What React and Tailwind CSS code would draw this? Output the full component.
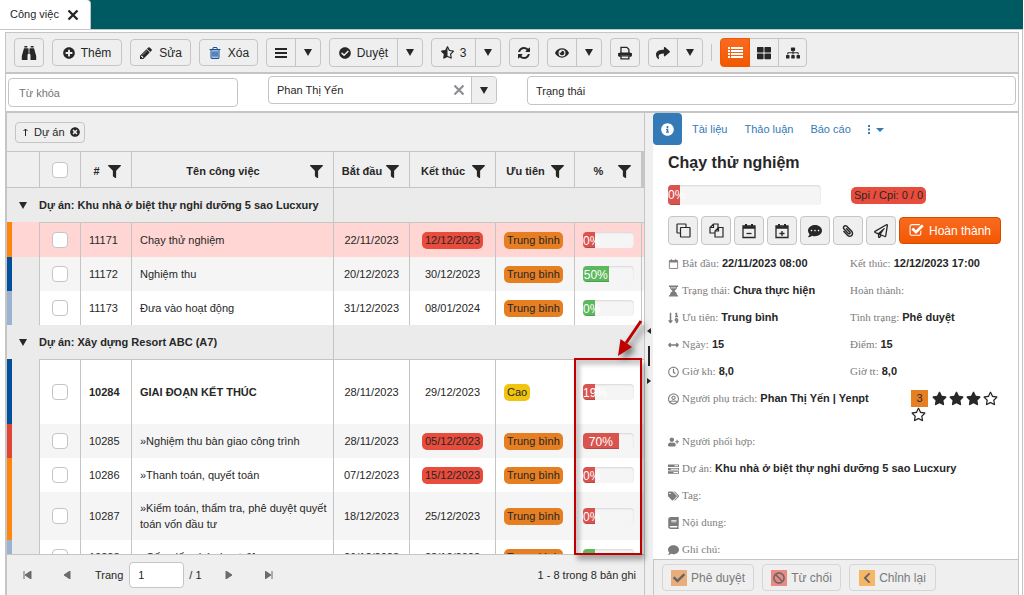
import {
    FaArrowsAltH,
    FaBan,
    FaBook,
    FaCheck,
    FaCheckCircle,
    FaChevronLeft,
    FaComment,
    FaCommentDots,
    FaEye,
    FaFilter,
    FaInfoCircle,
    FaPaperclip,
    FaPlusCircle,
    FaRegClock,
    FaRegPaperPlane,
    FaRegStar,
    FaRegUserCircle,
    FaShare,
    FaSitemap,
    FaSortNumericDown,
    FaStar,
    FaStarHalfAlt,
    FaTags,
    FaThLarge,
    FaTimesCircle,
    FaUserPlus,
} from "react-icons/fa";

const tasks = [
    {
        project: "Dự án: Khu nhà ở biệt thự nghỉ dưỡng 5 sao Lucxury",
        rows: [
            { id: "11171", name: "Chạy thử nghiệm", start: "22/11/2023", end: "12/12/2023", late: true, priority: "Trung bình", percent: 0, bar: "red", strip: "bg-[#ff860d]", selected: true, height: "h-[35px]" },
            { id: "11172", name: "Nghiệm thu", start: "20/12/2023", end: "30/12/2023", priority: "Trung bình", percent: 50, bar: "green", strip: "bg-[#00509b]" },
            { id: "11173", name: "Đưa vào hoạt động", start: "31/12/2023", end: "08/01/2024", priority: "Trung bình", percent: 0, bar: "green", strip: "bg-[#9ab3d3]" },
        ],
    },
    {
        project: "Dự án: Xây dựng Resort ABC (A7)",
        rows: [
            { id: "10284", name: "GIAI ĐOẠN KẾT THÚC", start: "28/11/2023", end: "29/12/2023", priority: "Cao", percent: 19, bar: "red", strip: "bg-[#00509b]", bold: true, height: "h-[65px]" },
            { id: "10285", name: "»Nghiệm thu bàn giao công trình", start: "28/11/2023", end: "05/12/2023", late: true, priority: "Trung bình", percent: 70, bar: "red", strip: "bg-[#e04433]" },
            { id: "10286", name: "»Thanh toán, quyết toán", start: "07/12/2023", end: "15/12/2023", late: true, priority: "Trung bình", percent: 0, bar: "red", strip: "bg-[#ff860d]" },
            { id: "10287", name: "»Kiểm toán, thẩm tra, phê duyệt quyết toán vốn đầu tư", start: "18/12/2023", end: "25/12/2023", priority: "Trung bình", percent: 0, bar: "red", strip: "bg-[#ff860d]", height: "h-12" },
            { id: "10288", name: "»Cấp giấy phép hoạt động", start: "26/12/2023", end: "28/12/2023", priority: "Trung bình", percent: 0, bar: "green", strip: "bg-[#9ab3d3]" },
        ],
    },
];

const columns = [
    { label: "#", width: "w-[51px]" },
    { label: "Tên công việc", width: "" },
    { label: "Bắt đầu", width: "w-[76px]" },
    { label: "Kết thúc", width: "w-[86px]" },
    { label: "Ưu tiên", width: "w-[79px]" },
    { label: "%", width: "w-[67px]" },
];

const details = [
    [{ icon: CalendarIcon, label: "Bắt đầu:", value: "22/11/2023 08:00" }, { label: "Kết thúc:", value: "12/12/2023 17:00" }],
    [{ icon: HourglassIcon, label: "Trạng thái:", value: "Chưa thực hiện" }, { label: "Hoàn thành:" }],
    [{ icon: FaSortNumericDown, label: "Ưu tiên:", value: "Trung bình" }, { label: "Tình trạng:", value: "Phê duyệt" }],
    [{ icon: FaArrowsAltH, label: "Ngày:", value: "15" }, { label: "Điểm:", value: "15" }],
    [{ icon: FaRegClock, label: "Giờ kh:", value: "8,0" }, { label: "Giờ tt:", value: "8,0" }],
];

const extraDetails = [
    { icon: FaUserPlus, label: "Người phối hợp:" },
    { icon: ServerIcon, label: "Dự án:", value: "Khu nhà ở biệt thự nghỉ dưỡng 5 sao Lucxury" },
    { icon: FaTags, label: "Tag:" },
    { icon: FaBook, label: "Nội dung:" },
    { icon: FaComment, label: "Ghi chú:" },
];

export default function App() {
    return (
        <div className="flex h-screen flex-col overflow-hidden bg-white font-['Liberation_Sans',Arial,sans-serif] text-[11px] text-[#272727]">
            <TabStrip />
            <div className="mr-px flex min-h-0 flex-1 flex-col border-t border-r border-[#c5c5c5] pt-[2px] pr-[3px] pl-[5px]">
                <Toolbar />
                <Filters />
                <main className="flex min-h-0 flex-1 border-r border-[#c5c5c5]">
                    <TaskGrid />
                    <Splitter />
                    <TaskDetail />
                </main>
            </div>
        </div>
    );
}

function TabStrip() {
    return (
        <div className="mr-px flex h-[29px] shrink-0 bg-[#005a61]">
            <div className="flex w-[91px] items-center gap-2 rounded-tr border-r border-[#c5c5c5] bg-white pl-[10px]">
                <span>Công việc</span>
                <button aria-label="Đóng">
                    <svg viewBox="0 0 12 12" className="size-3" stroke="currentColor" strokeWidth="2.4">
                        <path d="M1.5 1.5l9 9M10.5 1.5l-9 9" />
                    </svg>
                </button>
            </div>
        </div>
    );
}

function Toolbar() {
    return (
        <div className="flex h-[42px] shrink-0 items-center gap-2 border border-b-2 border-[#c5c5c5] bg-[#efefef] px-2 text-xs">
            <ToolButton width="w-[30px]" label="Tìm kiếm" icon={<BinocularsIcon className="size-4" />} />
            <ToolButton width="w-[70px]" text="Thêm" icon={<FaPlusCircle className="size-3" />} />
            <ToolButton width="w-[61px]" text="Sửa" icon={<PencilIcon className="size-[14px]" />} />
            <ToolButton width="w-[59px]" text="Xóa" icon={<TrashIcon className="size-[14px] text-[#1f4f8a]" />} />
            <SplitButton width="w-7" label="Danh sách" icon={<MenuIcon />} />
            <SplitButton width="w-[67px]" text="Duyệt" icon={<FaCheckCircle className="size-3" />} />
            <SplitButton width="w-[43px]" text="3" icon={<FaStarHalfAlt className="size-[13px]" />} />
            <ToolButton width="w-[30px]" label="Tải lại" icon={<RefreshIcon className="size-[14px]" />} />
            <SplitButton width="w-7" label="Xem" icon={<FaEye className="size-[14px]" />} />
            <ToolButton width="w-[30px]" label="In" icon={<PrintIcon className="size-[14px]" />} />
            <SplitButton width="w-7" label="Chia sẻ" icon={<FaShare className="size-[14px]" />} />
            <span className="h-[17px] w-px bg-[#c5c5c5]" />
            <div className="flex h-[29px] rounded border border-[#c5c5c5]">
                <button aria-label="Dạng danh sách" className="-m-px flex w-[30px] items-center justify-center rounded-l border border-[#f35800] bg-linear-to-b from-[#f96a1e] to-[#f35800] text-white">
                    <ListIcon />
                </button>
                <button aria-label="Dạng lưới" className="flex w-[29px] items-center justify-center">
                    <FaThLarge className="size-[14px]" />
                </button>
                <button aria-label="Dạng cây" className="flex w-7 items-center justify-center border-l border-[#c5c5c5]">
                    <FaSitemap className="size-[14px]" />
                </button>
            </div>
        </div>
    );
}

function ToolButton({ width, label, text, icon }) {
    return (
        <button
            aria-label={label}
            className={`flex shrink-0 items-center justify-center gap-[6px] rounded border border-[#c5c5c5] ${text ? "h-[27px]" : "h-[29px]"} ${width}`}
        >
            {icon}
            {text}
        </button>
    );
}

function SplitButton({ width, label, text, icon }) {
    return (
        <div className="flex h-[29px] shrink-0 rounded border border-[#c5c5c5]">
            <button aria-label={label} className={`flex items-center justify-center gap-[6px] ${width}`}>
                {icon}
                {text}
            </button>
            <button aria-label="Mở danh sách" className="flex w-[25px] items-center justify-center border-l border-[#c5c5c5]">
                <CaretIcon />
            </button>
        </div>
    );
}

function Filters() {
    return (
        <div className="flex h-[39px] shrink-0 items-start gap-[30px] border-x border-b-2 border-[#c5c5c5] bg-white px-[2px] pt-[2px]">
            <input
                aria-label="Từ khóa"
                placeholder="Từ khóa"
                className="mt-[2px] h-[29px] w-[230px] rounded border border-[#c5c5c5] px-[10px] placeholder:text-[#757575]"
            />
            <div className="flex h-7 w-[229px] rounded border border-[#c5c5c5]">
                <input aria-label="Người phụ trách" defaultValue="Phan Thị Yến" className="min-w-0 flex-1 px-2" />
                <button aria-label="Xóa lựa chọn" className="w-6 text-[#8d8f94]">
                    <svg viewBox="0 0 12 12" className="mx-auto size-3" stroke="currentColor" strokeWidth="2.2">
                        <path d="M1.5 1.5l9 9M10.5 1.5l-9 9" />
                    </svg>
                </button>
                <button aria-label="Mở danh sách" className="flex w-[25px] items-center justify-center rounded-r border-l border-[#c5c5c5] bg-[#efefef]">
                    <CaretIcon />
                </button>
            </div>
            <input
                aria-label="Trạng thái"
                placeholder="Trạng thái"
                className="h-[29px] min-w-0 flex-1 rounded border border-[#c5c5c5] px-2 placeholder:text-[#272727]"
            />
        </div>
    );
}

function TaskGrid() {
    return (
        <section className="relative flex min-w-0 flex-[637] flex-col border-r border-l-2 border-[#c5c5c5] bg-[#efefef]">
            {/* Group by chip */}
            <div className="flex h-[38px] shrink-0 items-center px-2">
                <div className="flex h-[21px] items-center gap-[5px] rounded border border-[#c5c5c5] pr-1 pl-[6px]">
                    <svg viewBox="0 0 7 9" className="h-[9px] w-[7px]" fill="none" stroke="currentColor">
                        <path d="M3.5 8V1M1.500 3L3.5 1L5.500 3" />
                    </svg>
                    <span>Dự án</span>
                    <button aria-label="Bỏ nhóm">
                        <FaTimesCircle className="size-[10px]" />
                    </button>
                </div>
            </div>

            <div className="min-h-0 flex-1 overflow-hidden border-t border-[#c5c5c5]">
                <table className="w-full table-fixed border-separate border-spacing-0">
                    <thead>
                        <tr className="h-9">
                            <th className="w-8 border-b border-[#c5c5c5]" />
                            <th className="w-[41px] border-b border-l border-[#c5c5c5]">
                                <Checkbox label="Chọn tất cả" />
                            </th>
                            {columns.map((col) => (
                                <th key={col.label} className={`border-b border-l border-[#c5c5c5] px-0 pt-[3px] pb-0 ${col.width}`}>
                                    <div className="flex items-center pr-[10px] pl-1">
                                        <span className="flex-1 text-center whitespace-nowrap">{col.label}</span>
                                        <FaFilter className="size-[13px] shrink-0" />
                                    </div>
                                </th>
                            ))}
                            <th className="w-[3px] border-b border-l border-[#c5c5c5] bg-[#c5c5c5]" />
                        </tr>
                    </thead>
                    {tasks.map((group) => (
                        <tbody key={group.project}>
                            <tr className="h-[34px] bg-[#ebebeb] font-bold">
                                <td className="p-0">
                                    <button aria-label="Thu gọn nhóm" className="mx-auto block">
                                        <CaretIcon />
                                    </button>
                                </td>
                                <td colSpan={3} className="p-0 whitespace-nowrap">
                                    {group.project}
                                </td>
                                <td colSpan={5} className="border-l border-[#c5c5c5] p-0" />
                            </tr>
                            {group.rows.map((row, i) => (
                                <TaskRow key={row.id} row={row} index={i} />
                            ))}
                        </tbody>
                    ))}
                </table>
            </div>

            {/* Pager */}
            <div className="flex h-[41px] shrink-0 items-center border-t border-[#c5c5c5] pr-2 pl-4">
                <PagerButton width="w-10" label="Trang đầu" path="M1 0v8M8 0v8L2 4z" />
                <PagerButton width="w-8" label="Trang trước" path="M7 0v8L1 4z" />
                <label className="flex items-center gap-[6px]">
                    Trang
                    <input defaultValue="1" className="h-[26px] w-[55px] rounded border border-[#c5c5c5] bg-white px-2" />
                </label>
                <span className="mr-[23px] ml-[5px]">/ 1</span>
                <PagerButton width="w-10" label="Trang sau" path="M1 0v8L7 4z" />
                <PagerButton width="w-10" label="Trang cuối" path="M7 0v8M0 0v8L6 4z" />
                <span className="ml-auto">1 - 8 trong 8 bản ghi</span>
            </div>

            <Highlight />
        </section>
    );
}

function TaskRow({ row, index }) {
    const background = row.selected ? "bg-[#ffd6d4]" : index % 2 === 1 ? "bg-[#f5f5f5]" : "bg-white";
    const top = index === 0 ? "border-t" : "";
    const cell = `border-l border-[#c5c5c5] pl-2 pr-0 py-0 ${top}`;

    return (
        <tr className={`${row.height || "h-[34px]"} ${background}`}>
            <td className={`p-0 ${row.selected ? "" : "bg-[#ebebeb]"}`}>
                <div className={`w-[5px] ${row.height || "h-[34px]"} ${row.strip}`} />
            </td>
            <td className={`border-l border-[#c5c5c5] p-0 ${top}`}>
                <Checkbox label={`Chọn ${row.id}`} />
            </td>
            <td className={`${cell} ${row.bold ? "font-bold" : ""}`}>{row.id}</td>
            <td className={`${cell} leading-4 ${row.bold ? "font-bold" : ""}`}>{row.name}</td>
            <td className={`border-l border-[#c5c5c5] p-0 text-center ${top}`}>{row.start}</td>
            <td className={`border-l border-[#c5c5c5] p-0 text-center ${top}`}>
                <span className={`inline-block rounded-[5px] px-[3px] leading-[17px] ${row.late ? "bg-[#e74c3c]" : ""}`}>{row.end}</span>
            </td>
            <td className={cell}>
                <span
                    className={`inline-block rounded-[5px] px-[3px] leading-[17px] whitespace-nowrap ${row.priority === "Cao" ? "bg-[#f1c40f]" : "bg-[#e67e22]"}`}
                >
                    {row.priority}
                </span>
            </td>
            <td className={cell}>
                <div className="pr-[7px]">
                    <ProgressBar percent={row.percent} color={row.bar} size="h-4 leading-[19px]" />
                </div>
            </td>
            <td className={`border-l border-[#c5c5c5] p-0 ${top}`} />
        </tr>
    );
}

function ProgressBar({ percent, color, size }) {
    return (
        <div className={`overflow-hidden rounded bg-[#f5f5f5] text-xs text-white shadow-[inset_0_1px_2px_rgba(0,0,0,0.12)] ${size}`}>
            <div
                className={`h-full min-w-3 text-center shadow-[inset_0_-1px_0_rgba(0,0,0,0.15)] ${color === "red" ? "bg-[#d9534f]" : "bg-[#5cb85c]"}`}
                style={{ width: `${percent}%` }}
            >
                {percent}%
            </div>
        </div>
    );
}

function Checkbox({ label }) {
    return <input type="checkbox" aria-label={label} className="mx-auto block size-4 appearance-none rounded border border-[#c5c5c5] bg-white" />;
}

function PagerButton({ width, label, path }) {
    return (
        <button aria-label={label} className={`flex h-6 justify-start text-[#6b6b6b] ${width}`}>
            <svg viewBox="0 0 9 8" className="my-auto h-2 w-[9px]" fill="currentColor" stroke="currentColor" strokeWidth="1">
                <path d={path} />
            </svg>
        </button>
    );
}

// Red frame and arrow drawn over the percent column
function Highlight() {
    return (
        <div className="pointer-events-none absolute top-[245px] right-[2px] bottom-10 w-[68px]">
            <svg viewBox="0 0 60 52" className="absolute -right-[1px] bottom-full h-[52px] w-[60px] overflow-visible drop-shadow-[4px_4px_3px_rgba(0,0,0,0.5)]">
                <path d="M58 15L43 37" stroke="#c00000" strokeWidth="3" />
                <path d="M35 50L37.500 33L49 41z" fill="#c00000" />
            </svg>
            <div className="h-full border-2 border-[#c00000] shadow-[3px_5px_5px_rgba(0,0,0,0.3),inset_4px_5px_4px_rgba(0,0,0,0.2)]" />
        </div>
    );
}

function Splitter() {
    return (
        <div className="flex w-2 shrink-0 flex-col items-center justify-center gap-3 bg-[#efefef] pt-1">
            <svg viewBox="0 0 4 6" className="h-[6px] w-1">
                <path d="M4 0v6L0 3z" fill="#272727" />
            </svg>
            <span className="h-5 w-[2px] bg-[#272727]" />
            <svg viewBox="0 0 4 6" className="h-[6px] w-1">
                <path d="M0 0v6L4 3z" fill="#272727" />
            </svg>
        </div>
    );
}

function TaskDetail() {
    return (
        <section className="flex min-w-0 flex-[365] flex-col">
            <nav className="flex h-8 shrink-0 items-center text-[#337ab7]">
                <a href="#info" aria-label="Thông tin" className="mr-[10px] flex h-8 w-[29px] items-center justify-center rounded bg-[#337ab7] text-white">
                    <FaInfoCircle className="size-[13px]" />
                </a>
                <a href="#files" className="mr-[17px]">Tài liệu</a>
                <a href="#discuss" className="mr-[17px]">Thảo luận</a>
                <a href="#report" className="mr-[17px]">Báo cáo</a>
                <a href="#more" aria-label="Thêm">
                    <svg viewBox="0 0 16 9" className="h-[9px] w-4" fill="currentColor">
                        <path d="M0 0h2v2H0zM0 3.5h2v2H0zM0 7h2v2H0zM8 3h8l-4 4z" />
                    </svg>
                </a>
            </nav>

            <div className="min-h-0 flex-1 overflow-hidden pr-4 pl-[15px]">
                <h2 className="mt-2 text-base leading-5 font-bold">Chạy thử nghiệm</h2>

                <div className="mt-3 flex items-center">
                    <div className="w-[183px] pr-[30px]">
                        <ProgressBar percent={0} color="red" size="h-5 leading-5" />
                    </div>
                    <span className="rounded-[5px] bg-[#e74c3c] px-[3px] leading-[17px]">Spi / Cpi: 0 / 0</span>
                </div>

                <div className="mt-[11px] flex items-center gap-[3px]">
                    <ActionButton label="Nhân bản"><CloneIcon /></ActionButton>
                    <ActionButton label="Sao chép"><CopyIcon /></ActionButton>
                    <ActionButton label="Giảm ngày"><CalendarIcon className="size-4" mark="M5.5 10.5h5" /></ActionButton>
                    <ActionButton label="Tăng ngày"><CalendarIcon className="size-4" mark="M5.5 10.5h5M8 8v5" /></ActionButton>
                    <ActionButton label="Bình luận"><FaCommentDots className="size-[14px]" /></ActionButton>
                    <ActionButton label="Đính kèm"><FaPaperclip className="size-3 -scale-x-100" /></ActionButton>
                    <ActionButton label="Gửi"><FaRegPaperPlane className="size-[14px]" /></ActionButton>
                    <button className="flex h-[27px] w-[102px] items-center justify-center gap-[5px] rounded border border-[#d44c00] bg-linear-to-b from-[#f96a1e] to-[#f35800] text-xs text-white">
                        <CheckSquareIcon className="size-[15px]" />
                        Hoàn thành
                    </button>
                </div>

                <dl className="mt-[5px]">
                    {details.map(([left, right]) => (
                        <div key={left.label} className="flex">
                            <div className="w-[182px]">
                                <Field {...left} />
                            </div>
                            <Field {...right} />
                        </div>
                    ))}
                    <div className="flex h-[43px] items-start justify-between">
                        <Field icon={FaRegUserCircle} label="Người phụ trách:" value="Phan Thị Yến | Yenpt" />
                        <div className="mt-[5px] flex w-[91px] flex-wrap items-center gap-x-[2px]">
                            <span className="mr-[2px] w-[17px] bg-[#e67e22] text-center leading-[17px]">3</span>
                            <FaStar className="size-[15px]" />
                            <FaStar className="size-[15px]" />
                            <FaStar className="size-[15px]" />
                            <FaRegStar className="size-[15px]" />
                            <FaRegStar className="size-[15px]" />
                        </div>
                    </div>
                    {extraDetails.map((field) => (
                        <Field key={field.label} {...field} />
                    ))}
                </dl>
            </div>

            {/* Approval actions */}
            <div className="flex h-9 shrink-0 gap-2 border border-r-0 border-b-0 border-[#c5c5c5] bg-[#efefef] px-2 pt-1">
                <ApproveButton width="w-[92px]" color="bg-[#e9ad79]" icon={FaCheck}>Phê duyệt</ApproveButton>
                <ApproveButton width="w-[79px]" color="bg-[#e98b83]" icon={FaBan}>Từ chối</ApproveButton>
                <ApproveButton width="w-[87px]" color="bg-[#f5b668]" icon={FaChevronLeft}>Chỉnh lại</ApproveButton>
            </div>
        </section>
    );
}

function ActionButton({ label, children }) {
    return (
        <button aria-label={label} className="flex h-[29px] w-[30px] items-center justify-center rounded border border-[#c5c5c5] bg-[#efefef]">
            {children}
        </button>
    );
}

function ApproveButton({ width, color, icon: Icon, children }) {
    return (
        <button disabled className={`flex h-[27px] items-center justify-center gap-1 rounded border border-[#d6d6d6] text-xs text-[#7a7a7a] ${width}`}>
            <span className={`flex size-4 items-center justify-center ${color}`}>
                <Icon className="size-3 text-[#666]" />
            </span>
            {children}
        </button>
    );
}

function Field({ icon: Icon, label, value }) {
    return (
        <div className="flex h-[27px] items-center gap-[3px] whitespace-nowrap">
            {Icon && <Icon className="h-3 w-[11px] shrink-0 text-[#7c7c7c]" />}
            <dt className="font-['Liberation_Serif','Times_New_Roman',serif] text-[#7c7c7c]">{label}</dt>
            <dd className="font-bold">{value}</dd>
        </div>
    );
}

function CaretIcon() {
    return (
        <svg viewBox="0 0 8 7" className="h-[7px] w-2" fill="currentColor">
            <path d="M0 0h8L4 7z" />
        </svg>
    );
}

function MenuIcon() {
    return (
        <svg viewBox="0 0 12 10" className="h-[10px] w-3" fill="currentColor">
            <path d="M0 0h12v2H0zM0 4h12v2H0zM0 8h12v2H0z" />
        </svg>
    );
}

function ListIcon() {
    return (
        <svg viewBox="0 0 15 11" className="h-[11px] w-[15px]" fill="currentColor">
            <path d="M0 0h2v2H0zM3 0h12v2H3zM0 3h2v2H0zM3 3h12v2H3zM0 6h2v2H0zM3 6h12v2H3zM0 9h2v2H0zM3 9h12v2H3z" />
        </svg>
    );
}

function BinocularsIcon({ className }) {
    return (
        <svg viewBox="0 0 16 16" className={className} fill="currentColor">
            <path d="M3.500 1H6.300V2.500H3.300zM3 3.200H7V9.500H6.500V15H.8V11zM9.700 1H12.500L12.700 2.500H9.700zM9 3.200H13L15.200 11V15H9.500V9.500H9zM7.400 3.500H8.600V9H7.400z" />
        </svg>
    );
}

function PencilIcon({ className }) {
    return (
        <svg viewBox="0 0 1792 1792" className={className} fill="currentColor">
            <path d="M491 1536l91-91-235-235-91 91v107h128v128h107zm523-928q0-22-22-22-10 0-17 7l-542 542q-7 7-7 17 0 22 22 22 10 0 17-7l542-542q7-7 7-17zm-54-192l416 416-832 832h-416v-416zm683 96q0 53-37 90l-166 166-416-416 166-165q36-38 90-38 53 0 91 38l235 234q37 39 37 91z" />
        </svg>
    );
}

function PrintIcon({ className }) {
    return (
        <svg viewBox="0 0 15 14" className={className} fill="none" stroke="currentColor" strokeWidth="1.4">
            <path d="M3.2 7V1h6.3l2.2 2.2V7M3.2 10v3.2h8.5V10z" />
            <path d="M1 11V8q0-1.5 1.5-1.5h10Q14 6.5 14 8v3h-2V9.5H3V11z" fill="currentColor" stroke="none" />
            <path d="M1 10.5V8h13v2.5" strokeWidth="1.8" />
        </svg>
    );
}

function CloneIcon() {
    return (
        <svg viewBox="0 0 15 15" className="size-[15px]" fill="none" stroke="currentColor" strokeWidth="1.2">
            <rect x="1" y="1" width="9" height="9" rx="0.5" />
            <rect x="4.5" y="4.5" width="9.5" height="9.5" rx="0.5" fill="#efefef" />
        </svg>
    );
}

function CopyIcon() {
    return (
        <svg viewBox="0 0 15 15" className="size-[15px]" fill="none" stroke="currentColor" strokeWidth="1.2">
            <path d="M9 5V1H4.5L1 4.5V10h5M4.5 1v3.5H1" />
            <path d="M9.5 4.5H14V14H6V8zM9.5 4.5V8H6" fill="#efefef" />
        </svg>
    );
}

function CalendarIcon({ className, mark }) {
    return (
        <svg viewBox="0 0 16 16" className={className} fill="none" stroke="currentColor" strokeWidth="1.3">
            <path d="M2 3h12v11.5H2z" />
            <path d="M2 4.5h12" strokeWidth="2.5" />
            <path d="M5 1v3M11 1v3" strokeWidth="2" />
            {mark && <path d={mark} />}
        </svg>
    );
}

function HourglassIcon({ className }) {
    return (
        <svg viewBox="0 0 12 12" className={className} fill="currentColor">
            <path d="M1 0h10v1.5H1zM1 10.5h10V12H1zM2 1.5h8Q10 4.5 7 6q3 1.5 3 4.5H2Q2 7.5 5 6Q2 4.5 2 1.5zM3 2.2h6v.8H3z" fillRule="evenodd" />
        </svg>
    );
}

function ServerIcon({ className }) {
    return (
        <svg viewBox="0 0 12 12" className={className} fill="currentColor">
            <path d="M0 1h12v2.8H0zM0 4.8h12v2.7H0zM0 8.5h12v2.7H0zM7 1.9h4v1H7zM3 5.7h8v1H3zM6 9.4h5v1H6z" fillRule="evenodd" />
        </svg>
    );
}

function TrashIcon({ className }) {
    return (
        <svg viewBox="0 0 1792 1792" className={className} fill="currentColor">
            <path d="M448 512h896v1000H448z" fill="#8fb8e6" />
            <path d="M704 736v576q0 14-9 23t-23 9h-64q-14 0-23-9t-9-23v-576q0-14 9-23t23-9h64q14 0 23 9t9 23zm256 0v576q0 14-9 23t-23 9h-64q-14 0-23-9t-9-23v-576q0-14 9-23t23-9h64q14 0 23 9t9 23zm256 0v576q0 14-9 23t-23 9h-64q-14 0-23-9t-9-23v-576q0-14 9-23t23-9h64q14 0 23 9t9 23zm128 724v-948h-896v948q0 22 7 40.5t14.5 27 10.5 8.5h832q3 0 10.5-8.5t14.5-27 7-40.5zm-672-1076h448l-48-117q-7-9-17-11h-317q-10 2-17 11zm928 32v64q0 14-9 23t-23 9h-96v948q0 83-47 143.5t-113 60.5h-832q-66 0-113-58.5t-47-141.5v-952h-96q-14 0-23-9t-9-23v-64q0-14 9-23t23-9h309l70-167q15-37 54-63t79-26h320q40 0 79 26t54 63l70 167h309q14 0 23 9t9 23z" />
        </svg>
    );
}

function RefreshIcon({ className }) {
    return (
        <svg viewBox="0 0 1792 1792" className={className} fill="currentColor">
            <path d="M1639 1056q0 5-1 7-64 268-268 434.5t-478 166.5q-146 0-282.5-55t-243.5-157l-129 129q-19 19-45 19t-45-19-19-45v-448q0-26 19-45t45-19h448q26 0 45 19t19 45-19 45l-137 137q71 66 161 102t187 36q134 0 250-65t186-179q11-17 53-117 8-23 30-23h192q13 0 22.5 9.5t9.5 22.5zm25-800v448q0 26-19 45t-45 19h-448q-26 0-45-19t-19-45 19-45l138-138q-148-137-349-137-134 0-250 65t-186 179q-11 17-53 117-8 23-30 23h-199q-13 0-22.5-9.5t-9.5-22.5v-7q65-268 270-434.5t480-166.5q146 0 284 55.5t245 156.5l130-129q19-19 45-19t45 19 19 45z" />
        </svg>
    );
}

function CheckSquareIcon({ className }) {
    return (
        <svg viewBox="0 0 1792 1792" className={className} fill="currentColor">
            <path d="M1472 930v318q0 119-84.5 203.5t-203.5 84.5h-832q-119 0-203.5-84.5t-84.5-203.5v-832q0-119 84.5-203.5t203.5-84.5h832q63 0 117 25 15 7 18 23 3 17-9 29l-49 49q-10 10-23 10-3 0-9-2-23-6-45-6h-832q-66 0-113 47t-47 113v832q0 66 47 113t113 47h832q66 0 113-47t47-113v-254q0-13 9-22l64-64q10-10 23-10 6 0 12 3 20 8 20 29zm231-489l-814 814q-24 24-57 24t-57-24l-430-430q-24-24-24-57t24-57l110-110q24-24 57-24t57 24l263 263 647-647q24-24 57-24t57 24l110 110q24 24 24 57t-24 57z" />
        </svg>
    );
}
